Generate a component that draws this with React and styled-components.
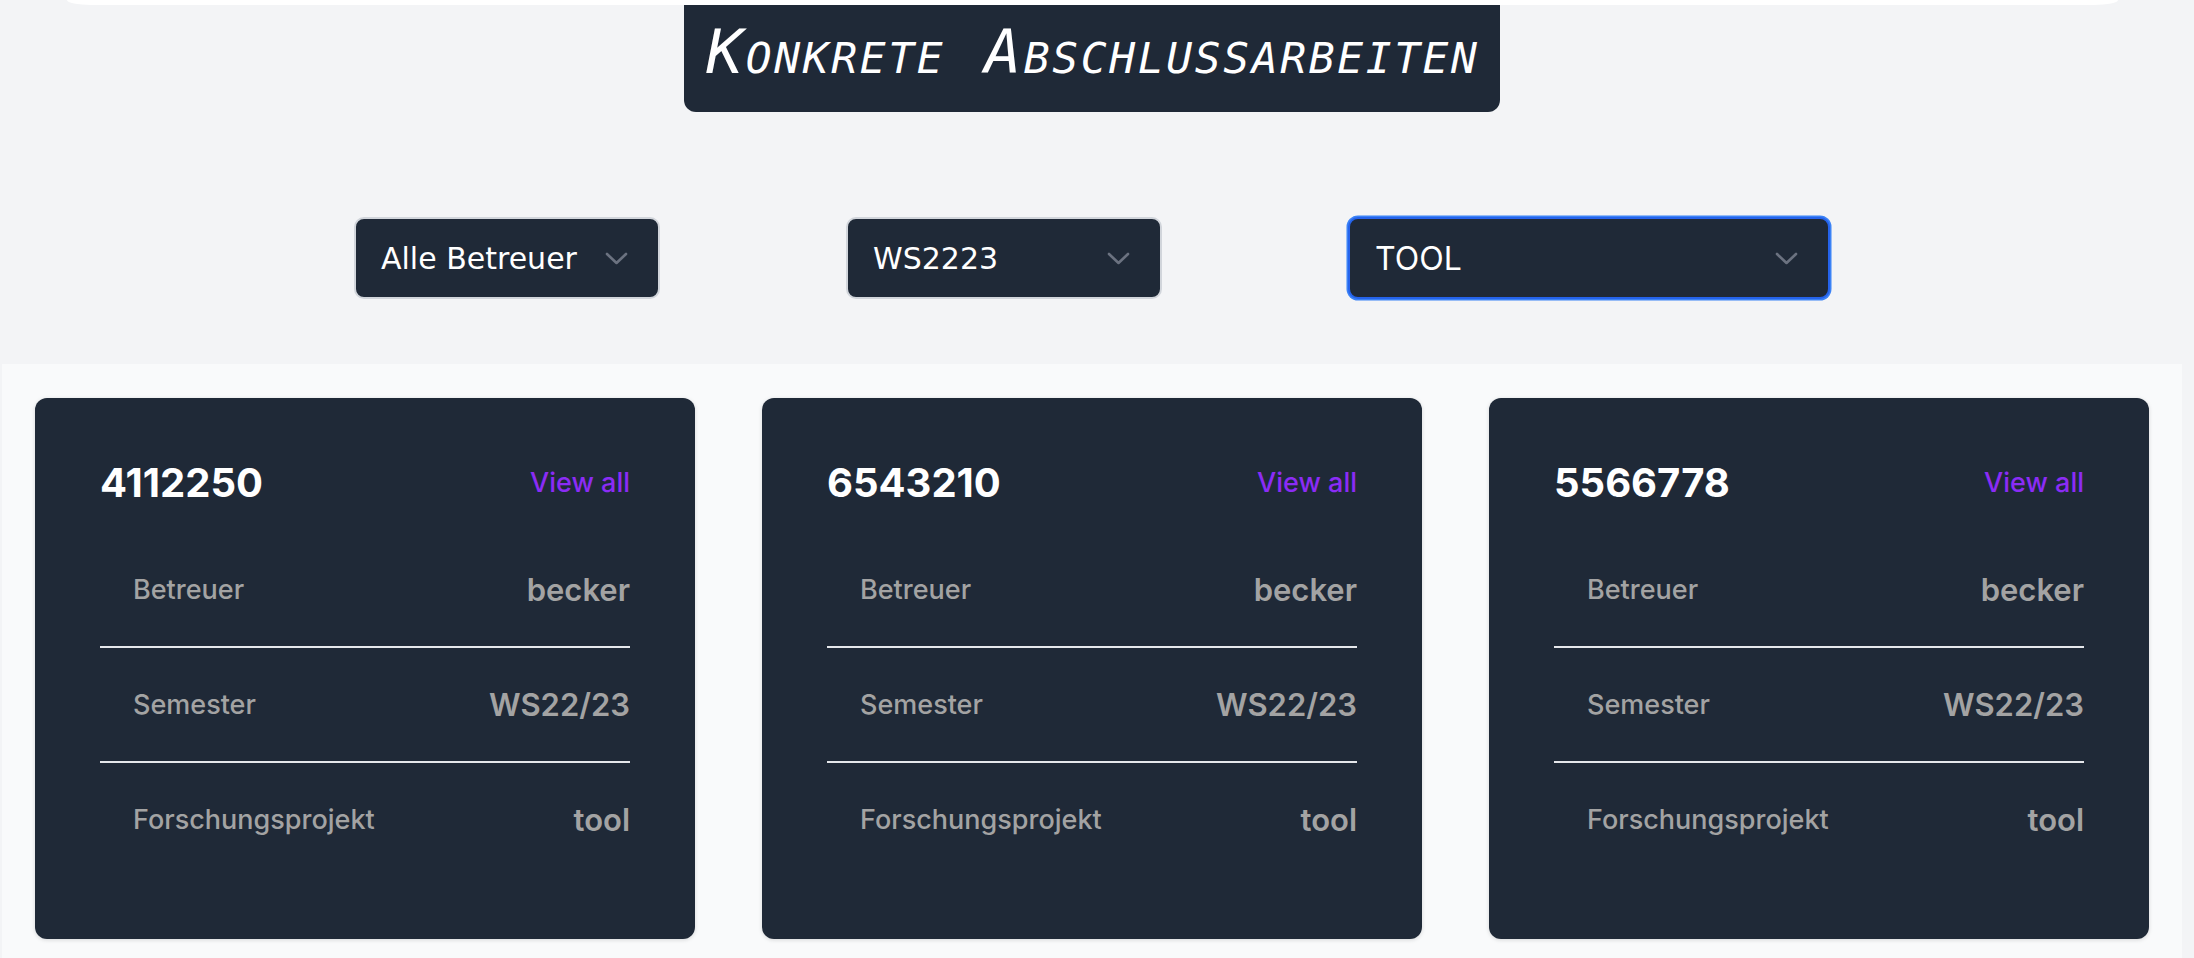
import styled, { createGlobalStyle } from "styled-components";

const GlobalStyle = createGlobalStyle`
  body {
    margin: 0;
    background-color: #f3f4f6;
    font-family: Inter, "Noto Sans", sans-serif;
  }
`;

const Page = styled.div`
  margin-right: 10px;
  min-height: 100vh;
`;

const NavBar = styled.div`
  height: 5px;
  margin: 0 66px 0 67px;
  background-color: white;
  border-radius: 0 0 24px 24px / 0 0 5px 5px;
`;

const TitleWrap = styled.div`
  display: flex;
  justify-content: center;
`;

const Title = styled.h1`
  margin: 0;
  padding: 11px 20px 25px 22px;
  background-color: #1f2937;
  color: white;
  font-family: "DejaVu Sans Mono", monospace;
  font-style: italic;
  font-weight: 400;
  font-variant: small-caps;
  font-size: 61px;
  letter-spacing: 2.6px;
  line-height: normal;
  border-radius: 0 0 12px 12px;
`;

const Filters = styled.div`
  display: flex;
  justify-content: center;
  gap: 186px;
  margin-top: 105px;
`;

const SelectBox = styled.div`
  box-sizing: border-box;
  width: ${(p) => p.$width}px;
  height: 82px;
  display: flex;
  align-items: center;
  justify-content: space-between;
  padding: 0 30px 0 25px;
  background-color: #1f2937;
  color: white;
  border: 2px solid ${(p) => (p.$active ? "#2563eb" : "#d1d5db")};
  box-shadow: ${(p) => (p.$active ? "0 0 0 1.5px #3b82f6" : "none")};
  border-radius: 10px;
  font-family: ${(p) => (p.$active ? 'Inter, "Liberation Sans", sans-serif' : '"DejaVu Sans", sans-serif')};
  font-size: ${(p) => (p.$active ? 32 : 30)}px;
  cursor: pointer;
`;

const Chevron = () => (
  <svg width="23" height="13" viewBox="0 0 23 13" fill="none">
    <path d="M2 2l9.5 9 9.5-9" stroke="#6b7280" strokeWidth="2.6" strokeLinecap="round" strokeLinejoin="round" />
  </svg>
);

const CardSection = styled.section`
  margin: 65px 2px 0;
  padding: 34px 33px;
  background-color: #f9fafb;
  display: grid;
  grid-template-columns: repeat(3, 1fr);
  gap: 67px;
`;

const Card = styled.div`
  background-color: #1f2937;
  border-radius: 12px;
  padding: 65px 65px 63px;
  box-shadow: 0 1px 4px rgba(0, 0, 0, 0.14);
`;

const CardHeader = styled.div`
  display: flex;
  align-items: center;
  justify-content: space-between;
  height: 39px;
`;

const Number = styled.h5`
  margin: 0;
  color: white;
  font-size: 40px;
  font-weight: 700;
  line-height: 39px;
`;

const ViewAll = styled.a`
  color: #8b2cf5;
  font-size: 27px;
  font-weight: 500;
  text-decoration: none;
  cursor: pointer;
`;

const List = styled.ul`
  list-style: none;
  margin: 31px 0 0;
  padding: 0;
`;

const Row = styled.li`
  display: flex;
  align-items: center;
  justify-content: space-between;
  padding: 35px 0 34px 33px;
  line-height: 44px;
  border-bottom: 2px solid #e5e7eb;

  &:last-child {
    border-bottom: none;
  }
`;

const Label = styled.span`
  color: #a3a3a3;
  font-size: 27px;
  font-weight: 500;
`;

const Value = styled.span`
  color: #a3a3a3;
  font-size: 31px;
  font-weight: 600;
`;

const theses = [
  { id: "4112250", betreuer: "becker", semester: "WS22/23", projekt: "tool" },
  { id: "6543210", betreuer: "becker", semester: "WS22/23", projekt: "tool" },
  { id: "5566778", betreuer: "becker", semester: "WS22/23", projekt: "tool" },
];

const App = () => {
  return (
    <Page>
      <GlobalStyle />
      <NavBar />
      <TitleWrap>
        <Title>Konkrete Abschlussarbeiten</Title>
      </TitleWrap>

      <Filters>
        <SelectBox $width={306}>
          Alle Betreuer
          <Chevron />
        </SelectBox>
        <SelectBox $width={316}>
          WS2223
          <Chevron />
        </SelectBox>
        <SelectBox $width={482} $active>
          TOOL
          <Chevron />
        </SelectBox>
      </Filters>

      <CardSection>
        {theses.map((t) => (
          <Card key={t.id}>
            <CardHeader>
              <Number>{t.id}</Number>
              <ViewAll>View all</ViewAll>
            </CardHeader>
            <List>
              <Row>
                <Label>Betreuer</Label>
                <Value>{t.betreuer}</Value>
              </Row>
              <Row>
                <Label>Semester</Label>
                <Value>{t.semester}</Value>
              </Row>
              <Row>
                <Label>Forschungsprojekt</Label>
                <Value>{t.projekt}</Value>
              </Row>
            </List>
          </Card>
        ))}
      </CardSection>
    </Page>
  );
};

export default App;
